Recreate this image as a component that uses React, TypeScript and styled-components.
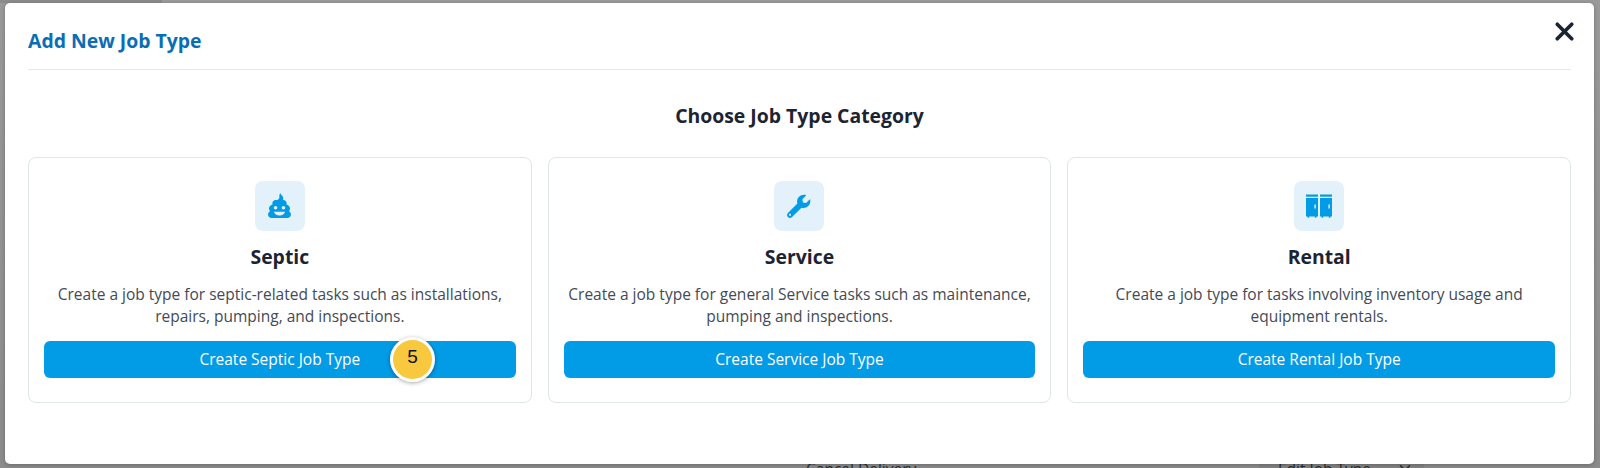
import React from "react";
import styled, { createGlobalStyle } from "styled-components";
import { ChevronDown, X } from "lucide-react";

const GlobalStyle = createGlobalStyle`
  html, body {
    margin: 0;
    padding: 0;
    height: 100%;
    overflow: hidden;
    font-family: "Open Sans", "Noto Sans", sans-serif;
  }
`;

const Page = styled.div`
  position: relative;
  display: flex;
  flex-direction: column;
  width: 1600px;
  height: 468px;
  overflow: hidden;
  background: linear-gradient(#9a9a9a, #8c8c8c);
  color: #2c2c2c;
  font-size: 15.5px;
`;

const SidebarEdge = styled.div`
  flex-shrink: 0;
  width: 162px;
  height: 3px;
  margin-bottom: 456px;
  background: #8c8c8c;
`;

const BackdropRow = styled.div`
  display: flex;
  flex-shrink: 0;
  height: 21px;
  line-height: 21px;
  padding: 0 176px 0 806px;
  white-space: nowrap;
`;

const RowAction = styled.div`
  display: flex;
  align-items: flex-start;
  gap: 25px;
  margin-left: auto;
  padding: 0 10px 0 19px;
  background: #848484;
`;

const Modal = styled.div`
  position: absolute;
  top: 3px;
  left: 5px;
  width: 1589px;
  height: 461px;
  box-sizing: border-box;
  padding: 0 23px;
  background: #fff;
  border-radius: 5px;
  box-shadow: 0 1px 4px rgba(0, 0, 0, 0.25);
`;

const Header = styled.div`
  display: flex;
  align-items: center;
  height: 67px;
  padding-top: 8px;
  box-sizing: border-box;
  border-bottom: 1px solid #e2e8ec;
`;

const ModalTitle = styled.h2`
  margin: 0;
  font-size: 19.4px;
  font-weight: 700;
  color: #0a6eb4;
`;

const CloseButton = styled.button`
  position: absolute;
  top: 14px;
  right: 15px;
  width: 29px;
  height: 29px;
  padding: 0;
  display: flex;
  align-items: center;
  justify-content: center;
  background: none;
  border: 0;
  color: #1c2433;
`;

const Heading = styled.h3`
  margin: 33px 0 0;
  height: 26px;
  line-height: 26px;
  text-align: center;
  font-size: 19.4px;
  font-weight: 700;
  color: #1c2433;
`;

const CardGrid = styled.div`
  display: grid;
  grid-template-columns: repeat(3, 1fr);
  gap: 16px;
  margin-top: 28px;
`;

const Card = styled.div`
  display: flex;
  flex-direction: column;
  align-items: center;
  height: 246px;
  box-sizing: border-box;
  padding: 23px 15px 24px;
  border: 1px solid #dfe5e9;
  border-radius: 8px;
`;

const IconTile = styled.div`
  display: flex;
  align-items: center;
  justify-content: center;
  width: 50px;
  height: 50px;
  border-radius: 8px;
  background: #e3f1fa;
  color: #029be6;
`;

const CardTitle = styled.div`
  margin-top: 13px;
  font-size: 19.4px;
  line-height: 26px;
  font-weight: 700;
  color: #1c2433;
`;

const CardText = styled.p`
  margin: 13px 0 0;
  max-width: 470px;
  font-size: 15.5px;
  line-height: 22px;
  text-align: center;
  color: #434a57;
`;

const ActionWrap = styled.div`
  position: relative;
  width: 100%;
  margin-top: auto;
`;

const ActionButton = styled.button`
  display: block;
  width: 100%;
  height: 37px;
  padding: 0 0 2px;
  border: 0;
  border-radius: 6px;
  background: #029be6;
  color: #fff;
  font-family: inherit;
  font-size: 15.5px;
  font-weight: 500;
`;

const StepBadge = styled.div`
  position: absolute;
  top: -4px;
  left: 346px;
  width: 39px;
  height: 34px;
  padding-bottom: 5px;
  display: flex;
  align-items: center;
  justify-content: center;
  border: 3px solid #fff;
  border-radius: 50%;
  background: #f8c93e;
  box-shadow: 0 1px 4px rgba(0, 0, 0, 0.35);
  color: #111;
  font-family: "Liberation Sans", Arial, sans-serif;
  font-size: 19px;
`;

const PoopIcon = () => (
  <svg width="31" height="31" viewBox="0 0 26 26" fill="currentColor">
    <path d="M13.6 1.5c.3 1.9 2.6 2.6 2.6 4.8 0 .5-.1.9-.3 1.2h.3c1.6 0 2.8 1.2 2.8 2.7 0 .4-.1.8-.2 1.1 1.7.3 3 1.7 3 3.4 0 .9-.4 1.7-.9 2.3 1 .5 1.7 1.5 1.7 2.7 0 1.7-1.4 3-3.1 3H6.5c-1.7 0-3.1-1.3-3.1-3 0-1.2.7-2.2 1.7-2.7-.6-.6-.9-1.4-.9-2.3 0-1.7 1.3-3.1 3-3.4-.1-.3-.2-.7-.2-1.1 0-1.5 1.2-2.7 2.8-2.7h1c1.3 0 2.1-1 2.1-2.4 0-1-.2-2.4.7-3.3z" />
    <circle cx="9.7" cy="14" r="1.5" fill="#e3f1fa" />
    <circle cx="16.3" cy="14" r="1.5" fill="#e3f1fa" />
    <path d="M8.3 17.4h9.4c-.4 2-2.4 3.2-4.7 3.2s-4.3-1.2-4.7-3.2z" fill="#e3f1fa" />
  </svg>
);

const WrenchIcon = () => (
  <svg width="26" height="26" viewBox="0 0 24 24" fill="currentColor">
    <path d="M22.7 6.3c-.1-.4-.6-.5-.9-.2l-3.2 3.2-3-.5-.5-3 3.2-3.2c.3-.3.1-.8-.3-.9-2.1-.5-4.400.1-6 1.700-1.700 1.700-2.200 4.200-1.500 6.300L1.800 18.400c-1.100 1.100-1.100 2.800 0 3.800 1.100 1.100 2.800 1.100 3.800 0l8.700-8.700c2.100.7 4.600.2 6.300-1.500 1.600-1.600 2.200-3.900 1.700-5.700zM3.700 21.100c-.6 0-1-.5-1-1s.4-1 1-1 1 .5 1 1-.5 1-1 1z" />
  </svg>
);

const LockersIcon = () => (
  <svg width="28" height="26" viewBox="0 0 28 26" fill="currentColor">
    <rect x="1" y="1.5" width="12" height="2.2" />
    <rect x="15" y="1.5" width="12" height="2.2" />
    <path d="M1 5h12v18.400h-1.600v1.400H9.800v-1.400H4.200v1.400H2.600v-1.400H1z" />
    <path d="M15 5h12v18.400h-1.600v1.400h-1.600v-1.400h-5.600v1.400h-1.600v-1.400H15z" />
    <rect x="9.4" y="11.5" width="1.4" height="4" fill="#e3f1fa" />
    <rect x="23.4" y="11.5" width="1.4" height="4" fill="#e3f1fa" />
  </svg>
);

const categories = [
  {
    title: "Septic",
    icon: <PoopIcon />,
    text: "Create a job type for septic-related tasks such as installations, repairs, pumping, and inspections.",
    action: "Create Septic Job Type",
    step: "5",
  },
  {
    title: "Service",
    icon: <WrenchIcon />,
    text: "Create a job type for general Service tasks such as maintenance, pumping and inspections.",
    action: "Create Service Job Type",
  },
  {
    title: "Rental",
    icon: <LockersIcon />,
    text: "Create a job type for tasks involving inventory usage and equipment rentals.",
    action: "Create Rental Job Type",
  },
];

export default function App() {
  return (
    <Page>
      <GlobalStyle />
      <SidebarEdge />
      <BackdropRow>
        <span>Cancel Delivery</span>
        <RowAction>
          <span>Edit Job Type</span>
          <ChevronDown size={18} strokeWidth={2} />
        </RowAction>
      </BackdropRow>
      <Modal>
        <Header>
          <ModalTitle>Add New Job Type</ModalTitle>
        </Header>
        <CloseButton aria-label="Close">
          <X size={29} strokeWidth={3} />
        </CloseButton>
        <Heading>Choose Job Type Category</Heading>
        <CardGrid>
          {categories.map((category) => (
            <Card key={category.title}>
              <IconTile>{category.icon}</IconTile>
              <CardTitle>{category.title}</CardTitle>
              <CardText>{category.text}</CardText>
              <ActionWrap>
                <ActionButton>{category.action}</ActionButton>
                {category.step && <StepBadge>{category.step}</StepBadge>}
              </ActionWrap>
            </Card>
          ))}
        </CardGrid>
      </Modal>
    </Page>
  );
}
